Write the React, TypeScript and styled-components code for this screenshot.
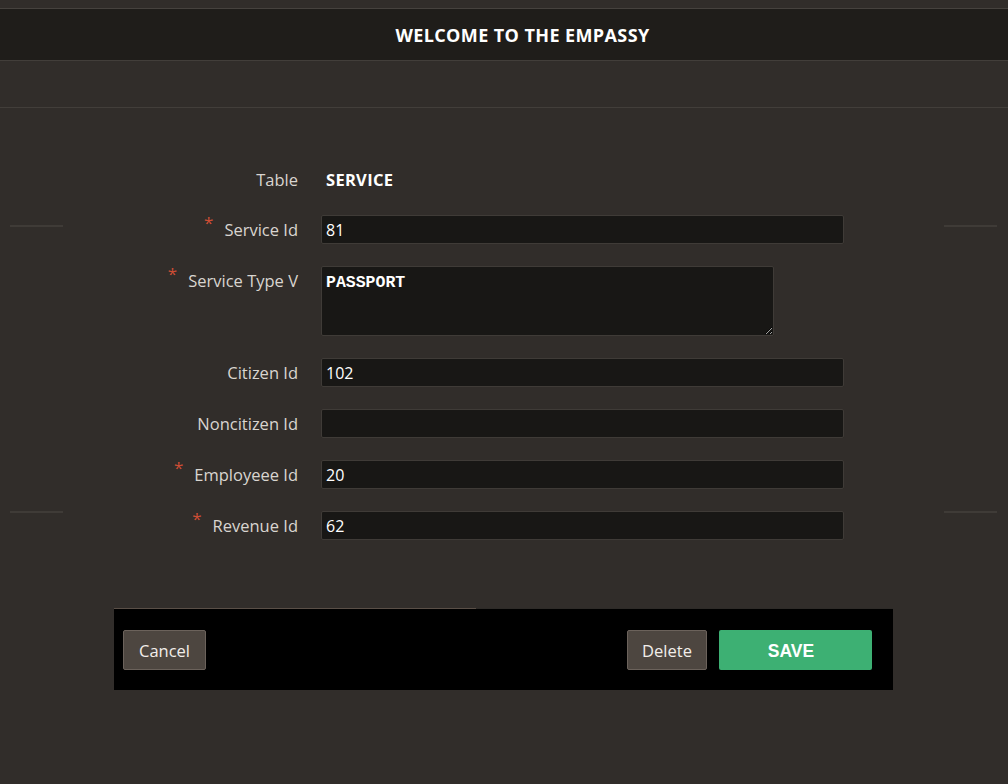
import React from "react";
import styled, { createGlobalStyle } from "styled-components";

const Global = createGlobalStyle`
  html, body { margin: 0; padding: 0; background: #312d2a; }
  body { font-family: "Open Sans", Lato, sans-serif; color: #d8d4cf; }
  * { box-sizing: border-box; }
`;

const Page = styled.div`
  min-height: 784px;
  background: #312d2a;
  display: flex;
  flex-direction: column;
`;

const TopStrip = styled.div`
  height: 9px;
  border-bottom: 1px solid #46423e;
`;

const Header = styled.header`
  height: 51px;
  background: #1f1d1a;
  display: flex;
  align-items: center;
  justify-content: center;
  padding-left: 37px;
`;

const Title = styled.h1`
  margin: 0;
  font-family: "Open Sans", sans-serif;
  font-weight: 700;
  font-size: 18px;
  color: #ffffff;
  letter-spacing: 0.4px;
`;

const SubBar = styled.div`
  height: 48px;
  border-top: 1px solid #423e3a;
  border-bottom: 1px solid #423e3a;
`;

const Main = styled.main`
  position: relative;
  padding-top: 58px;
  display: flex;
  flex-direction: column;
`;

const Tick = styled.span<{ $side: "left" | "right"; $top: number }>`
  position: absolute;
  ${(p) => (p.$side === "left" ? "left: 10px;" : "right: 11px;")}
  top: ${(p) => p.$top}px;
  width: 53px;
  height: 2px;
  background: #3f3b37;
`;

const Form = styled.div`
  display: grid;
  grid-template-columns: 298px 523px;
  column-gap: 23px;
  row-gap: 22px;
`;

const Label = styled.label<{ $h?: number }>`
  text-align: right;
  font-size: 16.5px;
  line-height: ${(p) => p.$h ?? 29}px;
  height: ${(p) => p.$h ?? 29}px;
  color: #d9d5d0;
  white-space: nowrap;
`;

const Req = styled.span`
  display: inline-block;
  color: #cf4d35;
  font-size: 17px;
  line-height: 10px;
  margin-right: 11px;
  transform: translateY(-7px);
`;

const Value = styled.div`
  font-size: 16.5px;
  line-height: 27px;
  height: 27px;
  font-weight: 700;
  color: #ffffff;
  padding-left: 5px;
  letter-spacing: 0.3px;
`;

const Input = styled.input`
  width: 523px;
  height: 29px;
  background: #181715;
  border: 1px solid #3f3b37;
  border-radius: 2px;
  color: #ffffff;
  font-family: "Open Sans", sans-serif;
  font-size: 16px;
  padding: 0 0 0 4px;
  outline: none;
`;

const Area = styled.textarea`
  width: 453px;
  height: 70px;
  background: #181715;
  border: 1px solid #3f3b37;
  border-radius: 2px;
  color: #ffffff;
  font-family: "Liberation Mono", monospace;
  font-weight: 700;
  font-size: 16.5px;
  padding: 6px 4px;
  outline: none;
`;

const Footer = styled.footer`
  width: 779px;
  margin: 68px 0 0 114px;
  background: #000000;
  border-top: 1px solid;
  border-image: linear-gradient(to right, #5a4f47 0 46.5%, #2e2b28 46.5% 100%) 1;
  padding: 21px 21px 20px 9px;
  display: flex;
  align-items: center;
  gap: 12px;
`;

const Spacer = styled.div`
  flex: 1;
`;

const Btn = styled.button<{ $w: number }>`
  width: ${(p) => p.$w}px;
  height: 40px;
  background: #4d4640;
  border: 1px solid #6b625b;
  border-radius: 2px;
  color: #f2eeea;
  font-family: "Open Sans", sans-serif;
  font-size: 16.5px;
  padding: 0;
  cursor: pointer;
`;

const SaveBtn = styled.button`
  width: 153px;
  height: 40px;
  background: #3db073;
  border: none;
  border-radius: 2px;
  color: #ffffff;
  font-family: "Liberation Sans", Arial, sans-serif;
  font-weight: 700;
  font-size: 17.5px;
  padding: 2px 9px 0 0;
  cursor: pointer;
`;

type Field = { label: string; value: string; required?: boolean; area?: boolean };

const fields: Field[] = [
  { label: "Service Id", value: "81", required: true },
  { label: "Service Type V", value: "PASSPORT", required: true, area: true },
  { label: "Citizen Id", value: "102" },
  { label: "Noncitizen Id", value: "" },
  { label: "Employeee Id", value: "20", required: true },
  { label: "Revenue Id", value: "62", required: true },
];

export default function App() {
  return (
    <Page>
      <Global />
      <TopStrip />
      <Header>
        <Title>WELCOME TO THE EMPASSY</Title>
      </Header>
      <SubBar />
      <Main>
        <Tick $side="left" $top={117} />
        <Tick $side="right" $top={117} />
        <Tick $side="left" $top={403} />
        <Tick $side="right" $top={403} />
        <Form>
          <Label $h={27}>Table</Label>
          <Value>SERVICE</Value>
          {fields.map((f) => (
            <React.Fragment key={f.label}>
              <Label>
                {f.required && <Req>*</Req>}
                {f.label}
              </Label>
              {f.area ? (
                <Area defaultValue={f.value} />
              ) : (
                <Input defaultValue={f.value} />
              )}
            </React.Fragment>
          ))}
        </Form>
        <Footer>
          <Btn $w={83}>Cancel</Btn>
          <Spacer />
          <Btn $w={80}>Delete</Btn>
          <SaveBtn>SAVE</SaveBtn>
        </Footer>
      </Main>
    </Page>
  );
}
